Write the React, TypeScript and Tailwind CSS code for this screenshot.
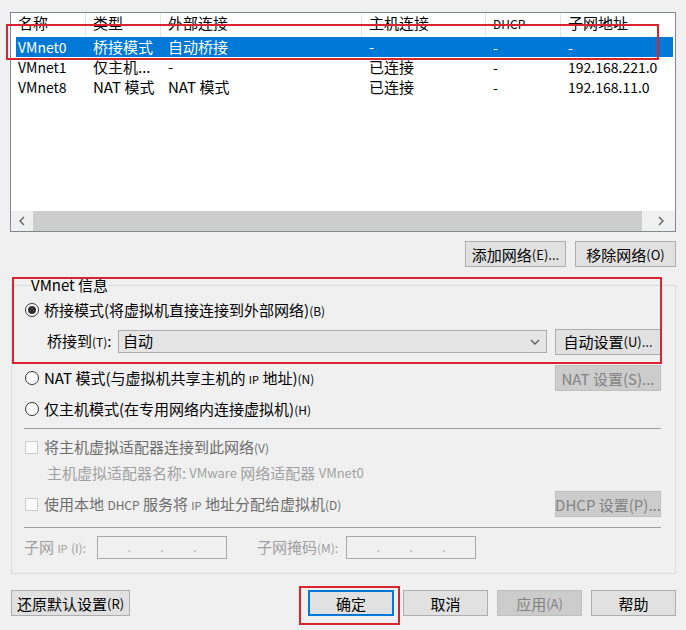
import React from "react";
import clsx from "clsx";

type Net = { name: string; type: string; ext: string; host: string; dhcp: string; subnet: string };

const nets: Net[] = [
  { name: "VMnet0", type: "桥接模式", ext: "自动桥接", host: "-", dhcp: "-", subnet: "-" },
  { name: "VMnet1", type: "仅主机...", ext: "-", host: "已连接", dhcp: "-", subnet: "192.168.221.0" },
  { name: "VMnet8", type: "NAT 模式", ext: "NAT 模式", host: "已连接", dhcp: "-", subnet: "192.168.11.0" },
];

// column widths after the first one (header and rows share them)
const colW = ["w-[75px]", "w-[201px]", "w-[124px]", "w-[75px]"];

function Btn({
  children,
  className,
  disabled = false,
  primary = false,
}: {
  children: React.ReactNode;
  className?: string;
  disabled?: boolean;
  primary?: boolean;
}) {
  return (
    <button
      type="button"
      className={clsx(
        "flex h-[26px] shrink-0 items-center justify-center whitespace-nowrap text-[15px] leading-none",
        disabled
          ? "border border-[#bfbfbf] bg-[#cccccc] text-[#838383]"
          : primary
            ? "border-2 border-[#0078d7] bg-[#e1e1e1] text-black"
            : "border border-[#adadad] bg-[#e1e1e1] text-black",
        className
      )}
    >
      {children}
    </button>
  );
}

function Key({ k }: { k: string }) {
  return <span className="text-[12px]">({k})</span>;
}

function Radio({ checked = false }: { checked?: boolean }) {
  return (
    <span className="ml-[1px] flex h-[14px] w-[14px] shrink-0 items-center justify-center rounded-full border border-[#333333] bg-white">
      {checked && <span className="h-[8px] w-[8px] rounded-full bg-[#333333]" />}
    </span>
  );
}

function Check() {
  return <span className="ml-[1px] h-[13px] w-[13px] shrink-0 border border-[#cccccc] bg-[#fbfbfb]" />;
}

function IpField() {
  return (
    <div className="flex h-[23px] w-[130px] items-center border border-[#a9a9a9] bg-[#f0f0f0] text-[11px] text-[#a0a0a0]">
      <span className="flex-1" />
      <span>.</span>
      <span className="flex-1" />
      <span>.</span>
      <span className="flex-1" />
      <span>.</span>
      <span className="flex-1" />
    </div>
  );
}

function Chevron({ dir }: { dir: "left" | "right" | "down" }) {
  const d = dir === "left" ? "M6 1 L2 5 L6 9" : dir === "right" ? "M2 1 L6 5 L2 9" : "M1 2 L5 6 L9 2";
  return (
    <svg width={dir === "down" ? 10 : 8} height={dir === "down" ? 8 : 10} viewBox={dir === "down" ? "0 0 10 8" : "0 0 8 10"}>
      <path d={d} fill="none" stroke="#606060" strokeWidth="1.4" />
    </svg>
  );
}

export default function App() {
  return (
    <div className="relative h-[630px] w-[686px] overflow-hidden bg-[#f0f0f0] pt-[12px] font-['Noto_Sans_CJK_SC',sans-serif] text-[15px] text-black">
      {/* network list */}
      <div className="ml-[10px] flex h-[220px] w-[666px] flex-col border border-[#828790] bg-white">
        <div className="flex h-[24px] shrink-0 leading-[19px]">
          <div className="w-[75px] border-r border-[#e5e5e5] pl-[7px]">名称</div>
          <div className={clsx(colW[0], "border-r border-[#e5e5e5] pl-[7px]")}>类型</div>
          <div className={clsx(colW[1], "border-r border-[#e5e5e5] pl-[7px]")}>外部连接</div>
          <div className={clsx(colW[2], "border-r border-[#e5e5e5] pl-[7px]")}>主机连接</div>
          <div className={clsx(colW[3], "border-r border-[#e5e5e5] pl-[7px] text-[12px] leading-[22px]")}>DHCP</div>
          <div className="flex-1 pl-[7px]">子网地址</div>
        </div>
        {nets.map((n, i) => (
          <div
            key={n.name}
            className={clsx(
              "ml-[5px] flex h-[20px] w-[657px] shrink-0 items-center leading-[20px]",
              i === 0 ? "bg-[#0078d7] text-white" : "text-black"
            )}
          >
            <div className="w-[70px] pl-[2px] text-[14px]">{n.name}</div>
            <div className={clsx(colW[0], "pl-[7px]")}>{n.type}</div>
            <div className={clsx(colW[1], "pl-[7px]")}>{n.ext}</div>
            <div className={clsx(colW[2], "pl-[7px]")}>{n.host}</div>
            <div className={clsx(colW[3], "pl-[7px] text-[14px]")}>{n.dhcp}</div>
            <div className="flex-1 pl-[7px] text-[14px]">{n.subnet}</div>
          </div>
        ))}
        <div className="flex-1" />
        <div className="flex h-[20px] shrink-0 items-center bg-[#f0f0f0]">
          <div className="flex w-[22px] items-center justify-center">
            <Chevron dir="left" />
          </div>
          <div className="h-full w-[609px] bg-[#cdcdcd]" />
          <div className="flex flex-1 items-center justify-end pr-[10px]">
            <Chevron dir="right" />
          </div>
        </div>
      </div>

      <div className="ml-[10px] mt-[9px] flex w-[666px] justify-end gap-[9px]">
        <Btn className="w-[101px]">
          添加网络<span className="text-[13px]">(E)...</span>
        </Btn>
        <Btn className="w-[101px]">
          移除网络<span className="text-[13px]">(O)</span>
        </Btn>
      </div>

      {/* VMnet info group */}
      <fieldset className="ml-[11px] mt-[8px] w-[665px] border border-[#dcdcdc] pb-[14px] pl-[12px] pr-[14px]">
        <legend className="ml-[7px] leading-[20px]">VMnet 信息</legend>
        <div className="flex flex-col">
          <div className="mt-[3px] flex h-[24px] items-center gap-[5px]">
            <Radio checked />
            <span>
              桥接模式(将虚拟机直接连接到外部网络)<Key k="B" />
            </span>
          </div>
          <div className="mt-[8px] flex h-[23px] items-center">
            <span className="w-[94px] pl-[23px]">
              桥接到<Key k="T" />:
            </span>
            <div className="flex h-[23px] w-[429px] items-center justify-between border border-[#acacac] bg-[#e5e5e5] pl-[4px] pr-[6px]">
              <span>自动</span>
              <Chevron dir="down" />
            </div>
            <Btn className="ml-[8px] h-[23px] w-[106px] border-[#adadad]">
              自动设置<span className="text-[13px]">(U)...</span>
            </Btn>
          </div>
          <div className="mt-[12px] flex h-[26px] items-center justify-between">
            <div className="flex items-center gap-[5px]">
              <Radio />
              <span>
                NAT 模式(与虚拟机共享主机的 <span className="text-[11px]">IP</span> 地址)<Key k="N" />
              </span>
            </div>
            <Btn disabled className="w-[106px] text-[14px]">
              NAT 设置(S)...
            </Btn>
          </div>
          <div className="mt-[8px] flex h-[20px] items-center gap-[5px]">
            <Radio />
            <span>
              仅主机模式(在专用网络内连接虚拟机)<Key k="H" />
            </span>
          </div>
          <div className="mt-[9px] h-px bg-[#a0a0a0]" />
          <div className="mt-[8px] flex h-[20px] items-center gap-[6px] text-[#6d6d6d]">
            <Check />
            <span>
              将主机虚拟适配器连接到此网络<Key k="V" />
            </span>
          </div>
          <div className="mt-[6px] flex h-[20px] items-center pl-[23px] text-[#a0a0a0]">
            主机虚拟适配器名称: <span className="ml-[3px] text-[13px]">VMware</span>&nbsp;网络适配器&nbsp;
            <span className="text-[13px]">VMnet0</span>
          </div>
          <div className="mt-[8px] flex h-[26px] items-center justify-between">
            <div className="flex items-center gap-[6px] text-[#6d6d6d]">
              <Check />
              <span>
                使用本地 <span className="text-[12px]">DHCP</span> 服务将 <span className="text-[11px]">IP</span> 地址分配给虚拟机
                <Key k="D" />
              </span>
            </div>
            <Btn disabled className="w-[106px] text-[14px]">
              DHCP 设置(P)...
            </Btn>
          </div>
          <div className="mt-[10px] h-px bg-[#a0a0a0]" />
          <div className="mt-[8px] flex h-[23px] items-center text-[#a0a0a0]">
            <span className="w-[73px]">
              子网 <span className="text-[11px]">IP</span> <span className="text-[12px]">(I):</span>
            </span>
            <IpField />
            <span className="ml-[30px] w-[89px]">
              子网掩码<span className="text-[12px]">(M):</span>
            </span>
            <IpField />
          </div>
        </div>
      </fieldset>

      {/* dialog buttons */}
      <div className="ml-[11px] mt-[16px] flex w-[665px] items-center justify-between">
        <Btn className="w-[119px]">
          还原默认设置<span className="text-[13px]">(R)</span>
        </Btn>
        <div className="flex gap-[9px]">
          <Btn primary className="w-[86px]">
            确定
          </Btn>
          <Btn className="w-[85px]">取消</Btn>
          <Btn disabled className="w-[85px]">
            应用<span className="text-[13px]">(A)</span>
          </Btn>
          <Btn className="w-[85px]">帮助</Btn>
        </div>
      </div>

      {/* red annotation boxes */}
      <div className="pointer-events-none absolute left-[6px] top-[24px] h-[36px] w-[653px] border-2 border-[#d9232f]" />
      <div className="pointer-events-none absolute left-[12px] top-[277px] h-[87px] w-[650px] border-2 border-[#d9232f]" />
      <div className="pointer-events-none absolute left-[299px] top-[586px] h-[39px] w-[101px] border-2 border-[#d9232f]" />
    </div>
  );
}
